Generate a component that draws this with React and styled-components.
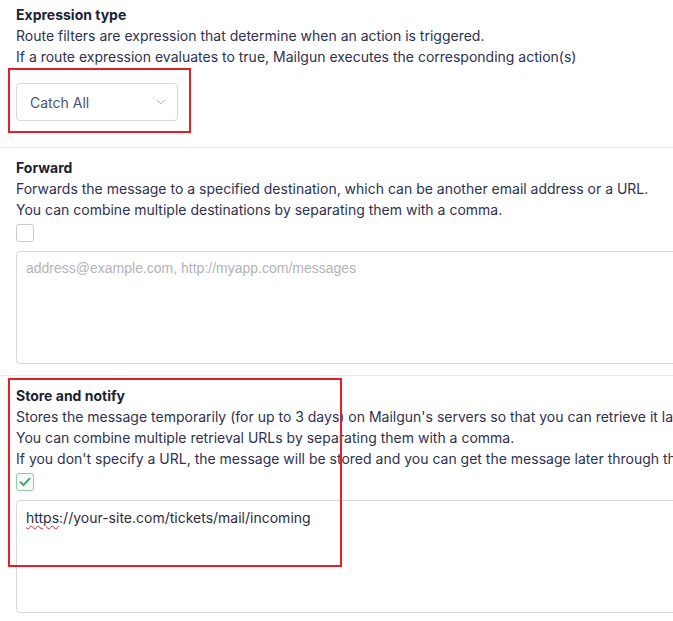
import React from 'react';
import styled, { createGlobalStyle } from 'styled-components';

const GlobalStyle = createGlobalStyle`
  html, body {
    margin: 0;
    padding: 0;
    background: #ffffff;
    overflow: hidden;
  }
  body {
    font-family: Inter, "Liberation Sans", Arial, sans-serif;
    color: #2a2d47;
  }
`;

const Page = styled.div`
  width: 920px;
  margin-top: -5px;
`;

const Section = styled.section`
  position: relative;
  padding: 9px 16px 11px;
  border-bottom: 1px solid #ececf0;
`;

const Title = styled.h3`
  margin: 0;
  font-size: 14px;
  line-height: 21px;
  font-weight: 700;
  color: #1c1f36;
`;

const Text = styled.p`
  margin: 0;
  font-size: 14px;
  line-height: 21px;
  color: #2e3150;
  white-space: nowrap;
`;

const SelectBox = styled.div`
  margin: 16px 0 15px;
  width: 162px;
  height: 38px;
  box-sizing: border-box;
  border: 1px solid #d6d7df;
  border-radius: 4px;
  display: flex;
  align-items: center;
  justify-content: space-between;
  padding: 0 11px 0 13px;
  font-size: 14px;
  color: #4a5272;
`;

const Checkbox = styled.div`
  margin-top: 4px;
  width: 18px;
  height: 18px;
  box-sizing: border-box;
  border: 1.5px solid ${p => (p.$checked ? '#8fcaa9' : '#c9cbd4')};
  background: ${p => (p.$checked ? '#f4fbf7' : '#ffffff')};
  border-radius: 3px;
  display: flex;
  align-items: center;
  justify-content: center;
`;

const TextBox = styled.div`
  margin-top: 9px;
  height: 113px;
  box-sizing: border-box;
  border: 1px solid #d6d7df;
  border-radius: 4px;
  padding: 6px 9px;
  font-size: 14px;
  line-height: 21px;
  color: ${p => (p.$placeholder ? '#b3b3b8' : '#2b2d3e')};
  font-family: ${p => (p.$placeholder ? '"Liberation Sans", Arial, sans-serif' : 'inherit')};
`;

const Misspelled = styled.span`
  text-decoration: underline wavy #e0242c;
  text-decoration-thickness: 1px;
  text-underline-offset: 2px;
`;

const Highlight = styled.div`
  position: absolute;
  left: ${p => p.$left}px;
  top: ${p => p.$top}px;
  width: ${p => p.$width}px;
  height: ${p => p.$height}px;
  box-sizing: border-box;
  border: 2px solid #e81e27;
  pointer-events: none;
`;

const Chevron = () => (
  <svg width="10" height="6" viewBox="0 0 10 6" fill="none">
    <path d="M1 1l4 4 4-4" stroke="#b9bac4" strokeWidth="1" strokeLinecap="round" />
  </svg>
);

const Check = () => (
  <svg width="12" height="10" viewBox="0 0 12 10" fill="none">
    <path d="M1.5 5.2l3 3 6-6.5" stroke="#3f9b6c" strokeWidth="1.8" strokeLinecap="round" strokeLinejoin="round" />
  </svg>
);

export default function App() {
  return (
    <>
      <GlobalStyle />
      <Page>
        <Section>
          <Title>Expression type</Title>
          <Text>Route filters are expression that determine when an action is triggered.</Text>
          <Text>If a route expression evaluates to true, Mailgun executes the corresponding action(s)</Text>
          <SelectBox>
            <span>Catch All</span>
            <Chevron />
          </SelectBox>
          <Highlight $left={8} $top={73} $width={183} $height={65} />
        </Section>

        <Section>
          <Title>Forward</Title>
          <Text>Forwards the message to a specified destination, which can be another email address or a URL.</Text>
          <Text>You can combine multiple destinations by separating them with a comma.</Text>
          <Checkbox />
          <TextBox $placeholder>address@example.com, http://myapp.com/messages</TextBox>
        </Section>

        <Section>
          <Title>Store and notify</Title>
          <Text>Stores the message temporarily (for up to 3 days) on Mailgun's servers so that you can retrieve it later.</Text>
          <Text>You can combine multiple retrieval URLs by separating them with a comma.</Text>
          <Text>If you don't specify a URL, the message will be stored and you can get the message later through the API.</Text>
          <Checkbox $checked>
            <Check />
          </Checkbox>
          <TextBox>
            <Misspelled>https</Misspelled>://your-site.com/tickets/mail/incoming
          </TextBox>
          <Highlight $left={8} $top={2} $width={334} $height={189} />
        </Section>
      </Page>
    </>
  );
}
